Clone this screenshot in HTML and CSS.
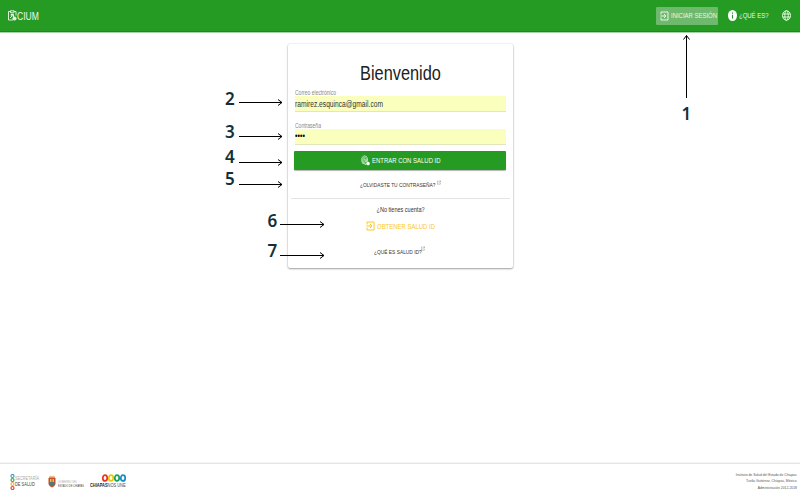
FILE: index.html
```html
<!DOCTYPE html>
<html lang="es">
<head>
<meta charset="utf-8">
<title>CIUM</title>
<link rel="stylesheet" href="styles.css">
</head>
<body>
<svg width="0" height="0" class="defs">
  <symbol id="enter" viewBox="0 0 18 20"><path d="M2 7V2h14v16H2v-5M1 10h10M8 6l4 4-4 4" fill="none" stroke="currentColor" stroke-width="2"/></symbol>
  <symbol id="out" viewBox="0 0 12 12"><path d="M5 2H1v9h9V7M7 1h4v4M11 1L5 7" fill="none" stroke="currentColor" stroke-width="1.300"/></symbol>
</svg>
<header class="bar">
  <div class="brand">
    <svg width="9" height="11" viewBox="0 0 18 22" fill="none" stroke="#fff" stroke-width="1.800"><path d="M5 3H1v17h9M12 3h4v8M5 1.500h7v4H5zM4 16l4-4M6 9h5v5"/><circle cx="8" cy="10" r="2"/><circle cx="13" cy="17" r="3.200" fill="#fff"/></svg>
    <span class="t left">CIUM</span>
  </div>
  <nav>
    <a class="login"><svg width="9" height="10"><use href="#enter"/></svg><span class="t left">INICIAR SESIÓN</span></a>
    <a class="about"><svg width="9" height="11" viewBox="0 0 18 22"><ellipse cx="9" cy="11" rx="9" ry="11" fill="#fff"/><path d="M9 5v2.600M9 9.500V17" stroke="#259b24" stroke-width="2.200"/></svg><span class="t left">¿QUÉ ES?</span></a>
    <svg class="globe" width="9" height="11" viewBox="0 0 18 22" fill="none" stroke="#fff" stroke-width="1.700"><ellipse cx="9" cy="11" rx="8" ry="9.500"/><ellipse cx="9" cy="11" rx="3.500" ry="9.500"/><path d="M1.500 8h15M1.500 14h15"/></svg>
  </nav>
</header>
<main>
  <section class="card">
    <h1><span class="t">Bienvenido</span></h1>
    <div class="label"><span class="t left">Correo electrónico</span></div>
    <div class="field"><span class="t left">ramirez.esquinca@gmail.com</span></div>
    <div class="label second"><span class="t left">Contraseña</span></div>
    <div class="field pass"><span class="t left">••••</span></div>
    <div class="submit">
      <svg width="9" height="11" viewBox="0 0 18 22" fill="none" stroke="#fff" stroke-width="1.300"><path d="M3 17Q0 10 2 5Q6-1 11 3Q14 6 13 13M5 18Q2 10 4.500 6Q8 2 10.500 7L11 14M7 19Q5 12 6.500 8Q8 6 8.500 9L9 15M9 20V17"/><circle cx="14" cy="17" r="3" fill="#fff"/></svg>
      <span class="t left">ENTRAR CON SALUD ID</span>
    </div>
    <div class="link forgot"><span class="t left">¿OLVIDASTE TU CONTRASEÑA?</span><svg width="4" height="5"><use href="#out"/></svg></div>
    <div class="ask"><span class="t">¿No tienes cuenta?</span></div>
    <div class="get"><svg width="9" height="10"><use href="#enter"/></svg><span class="t left">OBTENER SALUD ID</span></div>
    <div class="link what"><span class="t left">¿QUÉ ES SALUD ID?</span><svg width="4" height="5"><use href="#out"/></svg></div>
  </section>
</main>
<footer>
  <div class="logos">
    <div class="logo salud">
      <svg width="5" height="16" viewBox="0 0 5 16" fill="none" stroke-width="1.200"><circle cx="2.500" cy="2" r="1.500" stroke="#3b9ec4"/><circle cx="2.500" cy="6" r="1.500" stroke="#35a05a"/><circle cx="2.500" cy="10" r="1.500" stroke="#edb42c"/><circle cx="2.500" cy="14" r="1.500" stroke="#e2453c"/></svg>
      <div><span class="t left thin">SECRETARÍA</span><span class="t left">DE SALUD</span></div>
    </div>
    <div class="logo estado">
      <svg width="8" height="13" viewBox="0 0 8 13"><path d="M1 1l1 1 1-1.500L4 2 5 .5 6 2l1-1v2H1z" fill="#d7a633"/><path d="M.5 3h7v6Q7 11.500 4 12.500 1 11.500.5 9z" fill="#c94a31"/><path d="M1.500 7h5v3H1.500z" fill="#4b7b72"/><path d="M2 4h1.500v3H2zM4.500 4H6v3H4.500z" fill="#edbd4b"/></svg>
      <div><span class="t left thin">GOBIERNO DEL</span><span class="t left">ESTADO DE CHIAPAS</span></div>
    </div>
    <div class="logo chiapas">
      <svg width="24" height="8" viewBox="0 0 24 8" fill="none" stroke-width="1.700"><ellipse cx="3" cy="4" rx="2.200" ry="2.900" stroke="#e6332a"/><ellipse cx="9" cy="4" rx="2.200" ry="2.900" stroke="#f5c400"/><ellipse cx="15" cy="4" rx="2.200" ry="2.900" stroke="#16a05a"/><ellipse cx="21" cy="4" rx="2.200" ry="2.900" stroke="#168bc9"/></svg>
      <span class="t left"><b>CHIAPAS</b>NOS UNE</span>
    </div>
  </div>
  <address>
    <span class="t right">Instituto de Salud del Estado de Chiapas</span>
    <span class="t right">Tuxtla Gutiérrez, Chiapas, México</span>
    <span class="t right">Administración 2012-2018</span>
  </address>
</footer>
<svg class="notes" width="800" height="500">
  <defs><marker id="head" markerUnits="userSpaceOnUse" markerWidth="8" markerHeight="8" refX="5.500" refY="4" orient="auto"><path d="M1.500 1L5.500 4l-4 3" fill="none" stroke="#000"/></marker></defs>
  <g stroke="#000">
    <path d="M686.500 98V35.500" marker-end="url(#head)"/>
    <path d="M239 102.500h43" marker-end="url(#head)"/>
    <path d="M239 136.500h43" marker-end="url(#head)"/>
    <path d="M239 162.500h43" marker-end="url(#head)"/>
    <path d="M239 184.500h43" marker-end="url(#head)"/>
    <path d="M280 224.500h44" marker-end="url(#head)"/>
    <path d="M280 255.500h44" marker-end="url(#head)"/>
  </g>
  <g class="num">
    <text x="681.500" y="120">1</text><text x="225" y="104.500">2</text><text x="225" y="137.500">3</text><text x="225" y="163">4</text><text x="225" y="185">5</text><text x="267.500" y="226.500">6</text><text x="267.500" y="256.500">7</text>
  </g>
</svg>
</body>
</html>
```
FILE: styles.css
```css
* { box-sizing: border-box; }
body {
  margin: 0; width: 800px; height: 500px; overflow: hidden; position: relative;
  display: flex; flex-direction: column; background: #fff;
  font-family: "Liberation Sans", Arial, sans-serif; color: #333;
}
.defs { position: absolute; }
svg { flex: none; display: block; }
.t { display: inline-block; white-space: nowrap; transform: scaleX(.785); }
.left { transform-origin: 0 50%; }
.right { transform-origin: 100% 50%; }

.bar {
  flex: none; height: 32px; display: flex; justify-content: space-between;
  background: #259b24; border-bottom: 1px solid #178b17; box-shadow: 0 1px 0 #a5d3a5; color: #fff;
}
.brand { display: flex; align-items: center; padding-left: 8px; font-size: 10.900px; opacity: .93; }
nav { display: flex; align-items: center; font-size: 7.600px; }
nav a { display: flex; align-items: center; height: 18px; color: #eaf6ea; }
.login { width: 62px; margin-right: 10px; padding-left: 3.500px; gap: 2px; background: #6eb96d; border-radius: 1px; }
.login .t, .about .t { width: 0; }
.about { width: 54px; gap: 2px; }
.globe { margin-right: 9px; }

main { flex: 1; display: flex; justify-content: center; align-items: flex-start; padding: 12px 0 0 1px; }
.card {
  width: 225px; height: 224px; padding: 16px 7px 0; background: #fff; border-radius: 2px;
  box-shadow: 0 1px 2px rgba(0,0,0,.35), 0 0 2px rgba(0,0,0,.15);
}
h1 { margin: 0; height: 27px; line-height: 25px; font-size: 20.800px; font-weight: 400; text-align: center; color: #212121; }
h1 .t { margin-left: -1px; }
.label { height: 9px; line-height: 12px; font-size: 6.400px; color: #888; }
.label.second { margin-top: 8px; line-height: 11px; }
.field { height: 16px; line-height: 16px; font-size: 8.500px; color: #333; background: #faffbd; border-bottom: 1px solid #e2e5bd; }
.pass { line-height: 15px; font-size: 9px; color: #000; }
.submit {
  display: flex; align-items: center; height: 19px; margin-top: 6px; margin-left: -1px; padding-left: 67px; gap: 2px;
  background: #259b24; color: #fff; font-size: 7.600px; border-radius: 1px; box-shadow: 0 1px 1px rgba(0,0,0,.3);
}
.link { display: flex; align-items: center; font-size: 6.200px; color: #333; }
.link svg { color: #777; margin-bottom: 5px; }
.forgot { height: 29px; margin: 0 -4px; padding: 1px 0 0 69px; border-bottom: 1px solid #e4e4e4; }
.forgot .t { width: 76.500px; }
.ask { height: 22px; line-height: 22px; font-size: 7.050px; text-align: center; }
.get { display: flex; align-items: center; height: 10px; padding-left: 71px; gap: 2px; color: #fcc822; font-size: 7.600px; }
.what { height: 12px; margin-top: 14px; padding-left: 79px; }
.what .t { width: 47px; }

footer { flex: none; height: 37px; border-top: 1px solid #e5e5e5; box-shadow: 0 -1px 0 #f5f5f5; display: flex; justify-content: space-between; }
.logos { display: flex; padding-left: 10px; }
.logo { display: flex; font-size: 5.500px; line-height: 6px; color: #444; }
.logo .t { display: block; width: 0; }
.logo .thin { color: #aaa; }
.salud { width: 38px; padding-top: 10px; }
.salud .t { font-size: 5.500px; transform: scaleX(.72); }
.salud .thin { transform: scaleX(.69); }
.salud > div { padding-top: 1px; }
.estado { width: 42px; padding-top: 11px; gap: 1.500px; }
.estado > div { padding-top: 5px; }
.estado .t { font-size: 3.500px; line-height: 4px; transform: scaleX(.72); }
.chiapas { flex-direction: column; padding-top: 10px; }
.chiapas svg { margin-left: 11.500px; }
.chiapas .t { font-size: 6px; line-height: 7px; transform: scaleX(.66); }
.chiapas b { color: #222; }
address { display: flex; flex-direction: column; align-items: flex-end; padding: 8px 3px 0 0; font-style: normal; font-size: 4.300px; line-height: 6.300px; color: #555; }

.notes { position: absolute; left: 0; top: 0; pointer-events: none; }
.num { font: 600 17px "Noto Sans", "Open Sans", sans-serif; fill: #12303a; }
```
